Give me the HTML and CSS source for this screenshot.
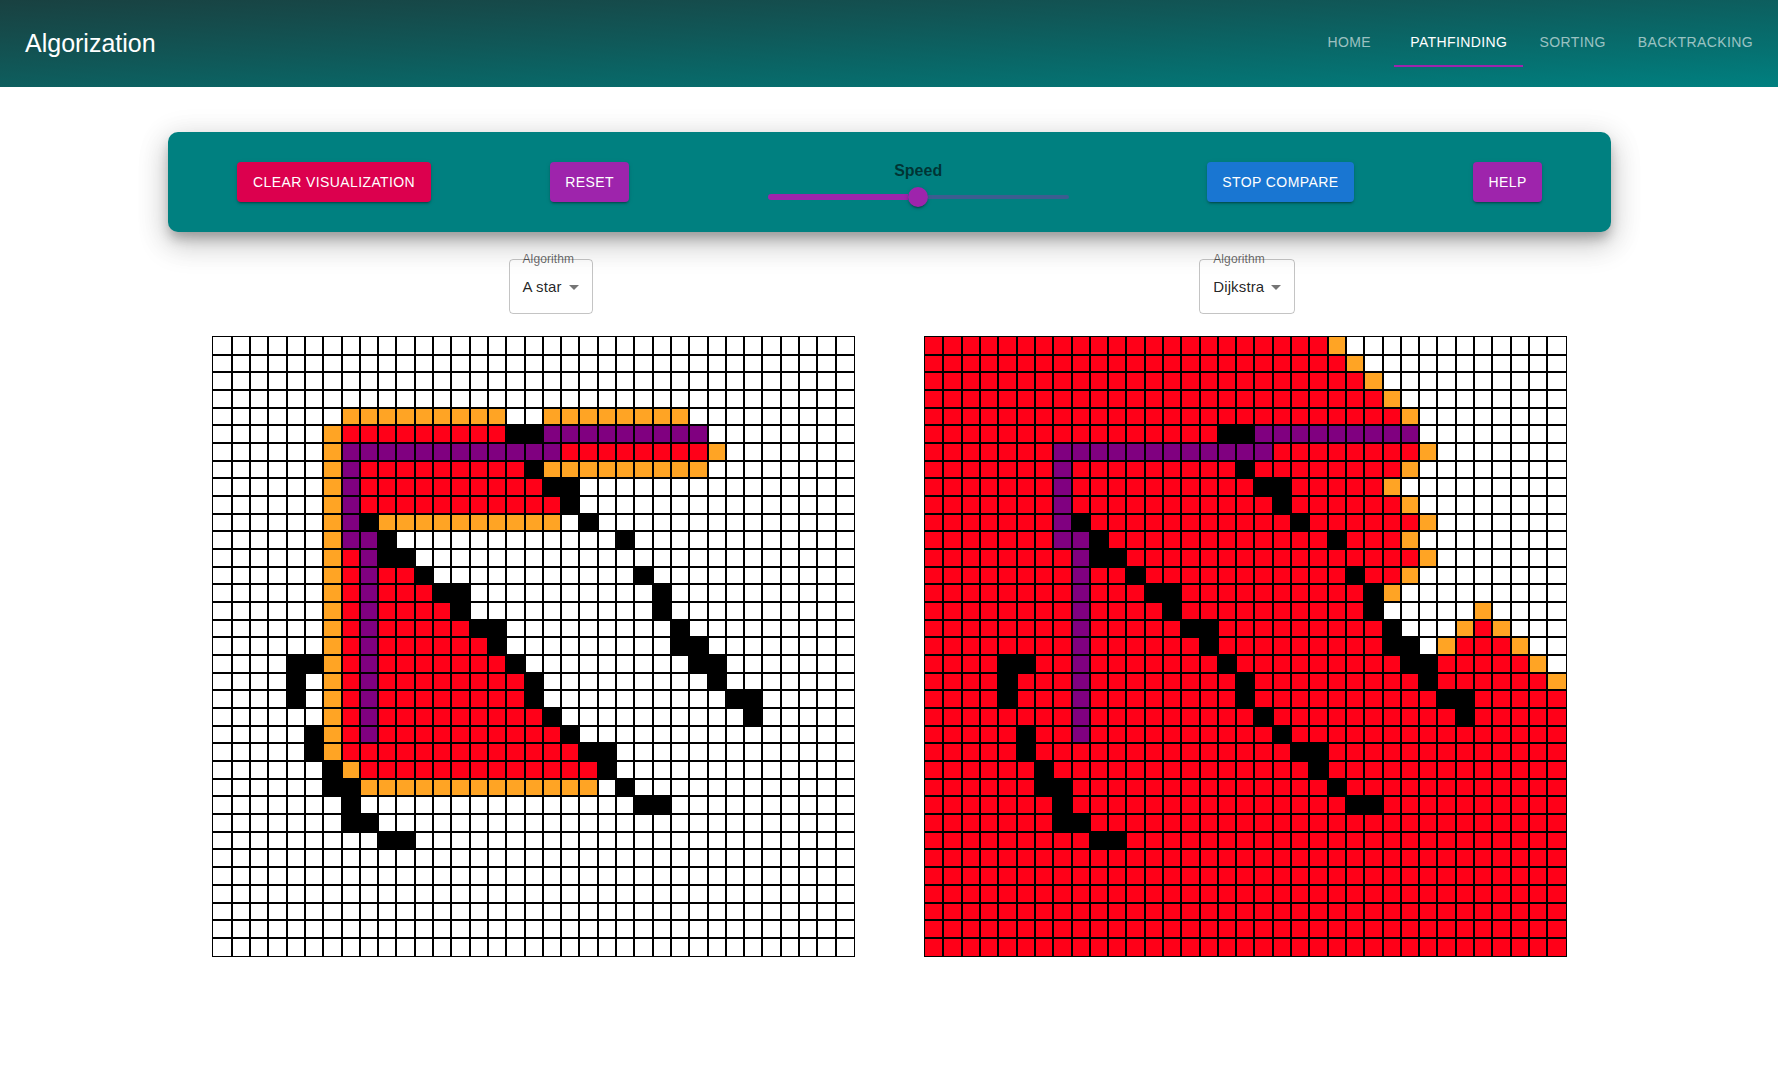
FILE: index.html
```html
<!DOCTYPE html>
<html lang="en">
<head>
<meta charset="utf-8">
<title>Algorization</title>
<link rel="stylesheet" href="styles.css">
</head>
<body>
<header class="app-bar">
  <div class="brand">Algorization</div>
  <nav class="tabs">
    <a class="tab">Home</a>
    <a class="tab tab-active">Pathfinding</a>
    <a class="tab">Sorting</a>
    <a class="tab">Backtracking</a>
  </nav>
</header>
<main>
  <section class="toolbar">
    <button class="btn btn-red">Clear Visualization</button>
    <button class="btn btn-purple">Reset</button>
    <div class="speed">
      <div class="speed-label">Speed</div>
      <div class="slider">
        <div class="slider-track"></div>
        <div class="slider-thumb"></div>
        <div class="slider-rail"></div>
      </div>
    </div>
    <button class="btn btn-blue">Stop Compare</button>
    <button class="btn btn-purple">Help</button>
  </section>
  <section class="selects">
    <div class="select select-first">
      <span class="select-label">Algorithm</span>
      <span class="select-value">A star</span>
      <svg class="select-arrow" viewBox="0 0 24 24"><path d="M7 10l5 5 5-5z"/></svg>
    </div>
    <div class="select">
      <span class="select-label">Algorithm</span>
      <span class="select-value">Dijkstra</span>
      <svg class="select-arrow" viewBox="0 0 24 24"><path d="M7 10l5 5 5-5z"/></svg>
    </div>
  </section>
  <section class="boards">
    <div class="board" id="astar"></div>
    <div class="board" id="dijkstra"></div>
  </section>
</main>
<script src="grid.js"></script>
</body>
</html>
```
FILE: styles.css
```css
* { box-sizing: border-box; }
body {
  margin: 0;
  background: #fff;
  font-family: "Liberation Sans", Arial, sans-serif;
  overflow: hidden;
}
.app-bar {
  height: 87px;
  padding: 0 9px 1px 25px;
  display: flex;
  align-items: center;
  justify-content: space-between;
  background: linear-gradient(to right bottom, #194141, #154c4c, #105858, #0a6565, #057272, #008080);
}
.brand { color: #fff; font-size: 25px; line-height: 32px; }
.tabs { display: flex; height: 48px; }
.tab {
  min-width: 90px;
  padding: 0 16px;
  text-align: center;
  font-size: 14px;
  line-height: 47px;
  letter-spacing: 0.4px;
  text-transform: uppercase;
  color: rgba(255, 255, 255, 0.6);
}
.tab-active { color: #fff; border-bottom: 2px solid #9e24ac; }

.toolbar {
  width: 1443px;
  height: 100px;
  margin: 45px 0 0 168.4px;
  padding: 0 9.5px;
  display: flex;
  align-items: center;
  justify-content: space-around;
  border-radius: 10px;
  background: #008080;
  box-shadow: 0 8px 12px -2px rgba(0, 0, 0, 0.26), 0 12px 30px 2px rgba(0, 0, 0, 0.16), 0 6px 30px 5px rgba(0, 0, 0, 0.08);
}
.btn {
  height: 40px;
  padding: 0 15.5px;
  border: 0;
  border-radius: 4px;
  color: #fff;
  font-family: inherit;
  font-size: 14px;
  letter-spacing: 0.4px;
  text-transform: uppercase;
  box-shadow: 0 3px 1px -2px rgba(0, 0, 0, 0.2), 0 2px 2px 0 rgba(0, 0, 0, 0.14), 0 1px 5px 0 rgba(0, 0, 0, 0.12);
}
.btn-red { background: #dc004e; }
.btn-purple { background: #9e24ac; }
.btn-blue { background: #1976d2; }
.speed { width: 301px; margin: 0 19px; }
.speed-label {
  padding-top: 3px;
  text-align: center;
  font-size: 16px;
  font-weight: bold;
  line-height: 24px;
  color: rgba(0, 0, 0, 0.6);
}
.slider { display: flex; align-items: center; height: 24px; margin-top: 2px; }
.slider-track { flex: 1; height: 6px; border-radius: 3px 0 0 3px; background: #9e24ac; }
.slider-thumb {
  width: 20px;
  height: 20px;
  border-radius: 50%;
  background: #9e24ac;
  box-shadow: 0 3px 1px -2px rgba(0, 0, 0, 0.2), 0 2px 2px 0 rgba(0, 0, 0, 0.14), 0 1px 5px 0 rgba(0, 0, 0, 0.12);
}
.slider-rail { flex: 1; height: 4px; border-radius: 0 2px 2px 0; background: rgba(158, 36, 172, 0.38); }

.selects { display: flex; padding: 27px 0 0 508.5px; }
.select {
  position: relative;
  height: 55px;
  padding: 0 6px 0 13px;
  display: flex;
  align-items: center;
  border: 1px solid rgba(0, 0, 0, 0.23);
  border-radius: 4px;
}
.select-first { margin-right: 606.5px; }
.select-label {
  position: absolute;
  left: 13px;
  top: -9px;
  font-size: 12px;
  line-height: 16px;
  letter-spacing: 0.11px;
  color: rgba(0, 0, 0, 0.6);
}
.select-value { font-size: 15px; letter-spacing: 0.14px; color: rgba(0, 0, 0, 0.87); }
.select-arrow { width: 24px; height: 24px; fill: rgba(0, 0, 0, 0.54); }

.boards { display: flex; gap: 68.96875px; padding: 22px 0 0 212.4375px; }
.board {
  display: grid;
  flex: none;
  grid-template-columns: 17.359375px repeat(33, 16.296875px) 17.5px;
  grid-template-rows: 16.671875px repeat(33, 15.671875px) 17.16px;
  gap: 2px;
  border: 1px solid #000;
  background: #000;
}
.cell { background: #fff; }
.cell-visited { background: #ff0018; }
.cell-frontier { background: #ffa424; }
.cell-path { background: #800080; }
.cell-wall { background: #000; }
```
FILE: grid.js
```js
const SIZE = 35;

// Row number -> list of [first column, last column] wall runs.
const walls = {
  5: [[16, 17]], 7: [[17, 17]], 8: [[18, 19]], 9: [[19, 19]],
  10: [[8, 8], [20, 20]], 11: [[9, 9], [22, 22]], 12: [[9, 10]],
  13: [[11, 11], [23, 23]], 14: [[12, 13], [24, 24]], 15: [[13, 13], [24, 24]],
  16: [[14, 15], [25, 25]], 17: [[15, 15], [25, 26]],
  18: [[4, 5], [16, 16], [26, 27]], 19: [[4, 4], [17, 17], [27, 27]],
  20: [[4, 4], [17, 17], [28, 29]], 21: [[18, 18], [29, 29]],
  22: [[5, 5], [19, 19]], 23: [[5, 5], [20, 21]], 24: [[6, 6], [21, 21]],
  25: [[6, 7], [22, 22]], 26: [[7, 7], [23, 24]], 27: [[7, 8]], 28: [[9, 10]]
};

function blank() {
  return Array.from({ length: SIZE }, () => Array(SIZE).fill(""));
}
function run(grid, row, kind, from, to) {
  for (let c = from; c <= to; c++) grid[row][c] = kind;
}
function overlay(grid) {
  run(grid, 5, "path", 18, 26);
  run(grid, 6, "path", 7, 18);
  for (let r = 7; r <= 11; r++) run(grid, r, "path", 7, 7);
  for (let r = 11; r <= 22; r++) run(grid, r, "path", 8, 8);
  for (const r in walls) walls[r].forEach(([a, b]) => run(grid, r, "wall", a, b));
}
function render(id, grid) {
  const board = document.getElementById(id);
  grid.flat().forEach(kind => {
    const cell = document.createElement("div");
    cell.className = kind ? "cell cell-" + kind : "cell";
    board.appendChild(cell);
  });
}

const astar = blank();
run(astar, 4, "frontier", 7, 15);
run(astar, 4, "frontier", 18, 25);
for (let r = 5; r <= 23; r++) run(astar, r, "frontier", 6, 6);
const visitedEnd = { 5: 15, 6: 26, 7: 16, 8: 17, 9: 18, 12: 8, 13: 10, 14: 11, 15: 12, 16: 13,
  17: 14, 18: 15, 19: 16, 20: 16, 21: 17, 22: 18, 23: 19, 24: 20 };
for (const r in visitedEnd) run(astar, r, "visited", 7, visitedEnd[r]);
run(astar, 6, "frontier", 27, 27);
run(astar, 7, "frontier", 18, 26);
run(astar, 10, "frontier", 9, 18);
run(astar, 24, "frontier", 7, 7);
run(astar, 25, "frontier", 8, 20);
overlay(astar);
render("astar", astar);

const dijkstra = blank();
const edge = [22, 23, 24, 25, 26, 27, 27, 26, 25, 26, 27, 26, 27, 26, 25, 25, 26, 27];
for (let r = 0; r < SIZE; r++) {
  if (r < edge.length) {
    run(dijkstra, r, "visited", 0, edge[r] - 1);
    if (r !== 5 && r < 15) run(dijkstra, r, "frontier", edge[r], edge[r]);
  } else {
    run(dijkstra, r, "visited", 0, SIZE - 1);
  }
}
run(dijkstra, 15, "frontier", 30, 30);
run(dijkstra, 16, "frontier", 29, 31);
run(dijkstra, 16, "visited", 30, 30);
run(dijkstra, 17, "frontier", 28, 32);
run(dijkstra, 17, "visited", 29, 31);
run(dijkstra, 18, "frontier", 33, 33);
run(dijkstra, 18, "", 34, 34);
run(dijkstra, 19, "frontier", 34, 34);
overlay(dijkstra);
render("dijkstra", dijkstra);
```
